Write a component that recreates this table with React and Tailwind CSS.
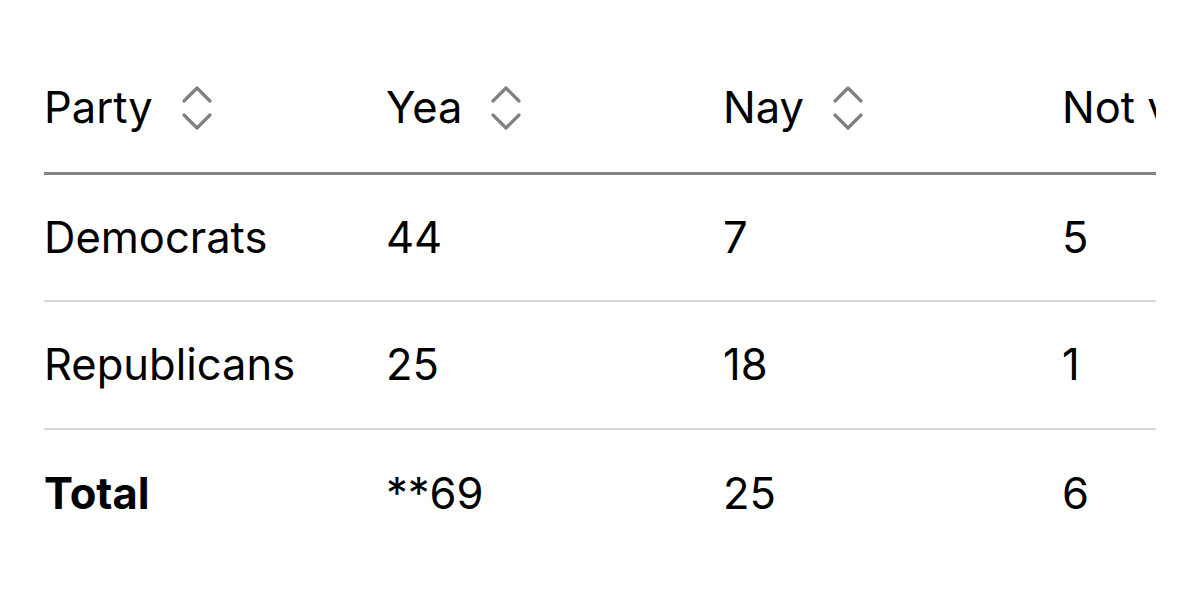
import React from 'react';

const SortIcon = () => (
  <svg width="32" height="46" viewBox="0 0 32 46" fill="none" stroke="#808080" strokeWidth="3.2" strokeLinecap="round" strokeLinejoin="round" className="shrink-0">
    <path d="M3 16 L16 3 L29 16" />
    <path d="M3 30 L16 43 L29 30" />
  </svg>
);

const rows = [
  { party: 'Democrats', yea: '44', nay: '7', nv: '5' },
  { party: 'Republicans', yea: '25', nay: '18', nv: '1' },
];

const App = () => {
  return (
    <main className="w-[1200px] h-[600px] bg-white overflow-hidden pt-[44px] pl-[44px] font-['Inter','Liberation_Sans',sans-serif] text-black">
      <div className="w-[1112px] overflow-hidden">
        <table className="table-fixed border-collapse w-[1360px] text-[43.5px] leading-none">
          <colgroup>
            <col className="w-[342px]" />
            <col className="w-[337px]" />
            <col className="w-[339px]" />
            <col className="w-[342px]" />
          </colgroup>
          <thead>
            <tr className="h-[129px] border-b-[3px] border-[#848484]">
              {['Party', 'Yea', 'Nay'].map((h) => (
                <th key={h} className="text-left font-normal p-0 align-middle">
                  <div className="flex items-center gap-[28px]">
                    <span>{h}</span>
                    <SortIcon />
                  </div>
                </th>
              ))}
              <th className="text-left font-normal p-0 align-middle whitespace-nowrap">Not voting</th>
            </tr>
          </thead>
          <tbody>
            {rows.map((r) => (
              <tr key={r.party} className="h-[128px] border-b-2 border-[#d8d8d8]">
                <td className="p-0 align-middle">{r.party}</td>
                <td className="p-0 align-middle">{r.yea}</td>
                <td className="p-0 align-middle">{r.nay}</td>
                <td className="p-0 align-middle">{r.nv}</td>
              </tr>
            ))}
            <tr className="h-[128px]">
              <td className="p-0 align-middle font-bold">Total</td>
              <td className="p-0 align-middle">**69</td>
              <td className="p-0 align-middle">25</td>
              <td className="p-0 align-middle">6</td>
            </tr>
          </tbody>
        </table>
      </div>
    </main>
  );
};

export default App;
